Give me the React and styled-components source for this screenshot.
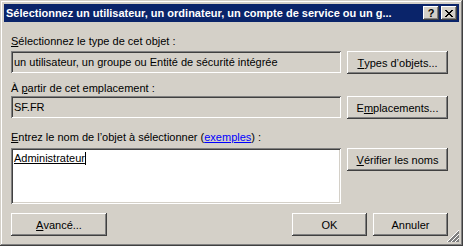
import React from 'react';
import styled, { createGlobalStyle } from 'styled-components';

const GlobalStyle = createGlobalStyle`
  html, body {
    margin: 0;
    padding: 0;
    background: #d4d0c8;
  }
  body {
    font-family: "Liberation Sans", Arial, sans-serif;
    font-size: 11px;
    color: #000;
  }
`;

const raised = `
  box-shadow:
    inset -1px -1px #404040,
    inset 1px 1px #ffffff,
    inset -2px -2px #808080,
    inset 2px 2px #d4d0c8;
`;

const sunken = `
  box-shadow:
    inset 1px 1px #808080,
    inset -1px -1px #ffffff,
    inset 2px 2px #404040,
    inset -2px -2px #d4d0c8;
`;

const Window = styled.div`
  position: relative;
  width: 463px;
  height: 246px;
  box-sizing: border-box;
  padding: 4px;
  background: #d4d0c8;
  box-shadow:
    inset -1px -1px #404040,
    inset 1px 1px #d4d0c8,
    inset -2px -2px #808080,
    inset 2px 2px #ffffff;
  display: flex;
  flex-direction: column;
`;

const TitleBar = styled.div`
  height: 18px;
  background: #0a246a;
  display: flex;
  align-items: center;
  padding: 0 2px;
`;

const Title = styled.div`
  flex: 1;
  color: #fff;
  font-weight: bold;
  font-size: 11px;
  white-space: nowrap;
  overflow: hidden;
`;

const CaptionButton = styled.div`
  width: 16px;
  height: 14px;
  box-sizing: border-box;
  background: #d4d0c8;
  ${raised}
  display: flex;
  align-items: center;
  justify-content: center;
  margin-left: ${p => p.$gap || 0}px;
  font-weight: bold;
  font-size: 11px;
  line-height: 14px;
`;

const Content = styled.div`
  padding: 0 11px 0 7px;
  display: flex;
  flex-direction: column;
`;

const Label = styled.div`
  height: 13px;
  line-height: 13px;
  margin-top: ${p => p.$top}px;
  margin-bottom: ${p => p.$bottom}px;
  white-space: nowrap;
`;

const Key = styled.span`
  text-decoration: underline;
`;

const Link = styled.span`
  color: #0000ff;
  text-decoration: underline;
`;

const Row = styled.div`
  display: flex;
  align-items: flex-start;
  gap: 6px;
`;

const Field = styled.div`
  width: 330px;
  height: 22px;
  box-sizing: border-box;
  background: #d4d0c8;
  ${sunken}
  padding: 0 3px;
  line-height: 22px;
  white-space: nowrap;
  overflow: hidden;
`;

const TextArea = styled(Field)`
  height: 56px;
  background: #fff;
  line-height: 13px;
  padding: 4px 3px;
`;

const Resolved = styled.span`
  text-decoration: underline;
`;

const Caret = styled.span`
  display: inline-block;
  width: 1px;
  height: 13px;
  background: #000;
  vertical-align: top;
`;

const Button = styled.div`
  width: ${p => p.$w || 101}px;
  height: 23px;
  box-sizing: border-box;
  background: #d4d0c8;
  ${raised}
  display: flex;
  align-items: center;
  justify-content: center;
  white-space: nowrap;
`;

const Footer = styled.div`
  display: flex;
  gap: 6px;
  margin-top: 9px;
`;

const Spacer = styled.div`
  flex: 1;
`;

const Grip = styled.svg`
  position: absolute;
  right: 4px;
  bottom: 4px;
`;

function CloseGlyph() {
  return (
    <svg width="8" height="7" viewBox="0 0 8 7" shapeRendering="crispEdges">
      <path d="M0 0h2v1h-2zM6 0h2v1h-2zM1 1h2v1h-2zM5 1h2v1h-2zM2 2h4v1h-4zM3 3h2v1h-2zM2 4h4v1h-4zM1 5h2v1h-2zM5 5h2v1h-2zM0 6h2v1h-2zM6 6h2v1h-2z" fill="#000" />
    </svg>
  );
}

function SizeGrip() {
  const lines = [0, 4, 8];
  return (
    <Grip width="12" height="12" viewBox="0 0 12 12" shapeRendering="crispEdges">
      {lines.map(o => (
        <g key={o}>
          <line x1={o + 0.5} y1="12" x2="12" y2={o + 0.5} stroke="#ffffff" />
          <line x1={o + 1.5} y1="12" x2="12" y2={o + 1.5} stroke="#808080" />
          <line x1={o + 2.5} y1="12" x2="12" y2={o + 2.5} stroke="#808080" />
        </g>
      ))}
    </Grip>
  );
}

export default function App() {
  return (
    <>
      <GlobalStyle />
      <Window>
        <TitleBar>
          <Title>Sélectionnez un utilisateur, un ordinateur, un compte de service ou un g...</Title>
          <CaptionButton>?</CaptionButton>
          <CaptionButton $gap={2}><CloseGlyph /></CaptionButton>
        </TitleBar>
        <Content>
          <Label $top={13} $bottom={3}><Key>S</Key>électionnez le type de cet objet :</Label>
          <Row>
            <Field>un utilisateur, un groupe ou Entité de sécurité intégrée</Field>
            <Button><Key>T</Key>ypes d’objets...</Button>
          </Row>
          <Label $top={8} $bottom={1}>À <Key>p</Key>artir de cet emplacement :</Label>
          <Row>
            <Field>SF.FR</Field>
            <Button>E<Key>m</Key>placements...</Button>
          </Row>
          <Label $top={12} $bottom={4}><Key>E</Key>ntrez le nom de l’objet à sélectionner (<Link>exemples</Link>) :</Label>
          <Row>
            <TextArea><Resolved>Administrateur</Resolved><Caret /></TextArea>
            <Button><Key>V</Key>érifier les noms</Button>
          </Row>
          <Footer>
            <Button $w={96}><Key>A</Key>vancé...</Button>
            <Spacer />
            <Button $w={75}>OK</Button>
            <Button $w={75}>Annuler</Button>
          </Footer>
        </Content>
        <SizeGrip />
      </Window>
    </>
  );
}
